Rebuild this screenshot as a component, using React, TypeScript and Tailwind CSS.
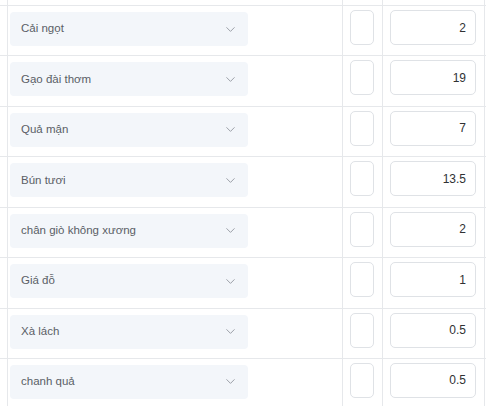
import { ChevronDown } from 'lucide-react';

const items = [
  { name: 'Cải ngọt', qty: '2' },
  { name: 'Gạo đài thơm', qty: '19' },
  { name: 'Quả mận', qty: '7' },
  { name: 'Bún tươi', qty: '13.5' },
  { name: 'chân giò không xương', qty: '2' },
  { name: 'Giá đỗ', qty: '1' },
  { name: 'Xà lách', qty: '0.5' },
  { name: 'chanh quả', qty: '0.5' },
];

function Row({ name, qty }: { name: string; qty: string }) {
  return (
    <div className="flex h-[50.43px] shrink-0 border-t border-[#e6e8eb]">
      <div className="w-[8px] shrink-0 border-r border-[#e6e8eb]" />
      <div className="w-[335px] shrink-0 border-r border-[#e6e8eb] pl-[2px] pt-[6px]">
        <div className="flex h-[34px] w-[238px] items-center justify-between rounded-[4px] bg-[#f3f6fa] pl-[11px] pr-[10px] text-[11.5px] text-[#5a5e66]">
          <span>{name}</span>
          <ChevronDown size={15} strokeWidth={1.4} className="text-[#8f949c]" />
        </div>
      </div>
      <div className="w-[40px] shrink-0 border-r border-[#e6e8eb] pl-[7px] pt-[4px]">
        <div className="h-[35px] w-[24px] rounded-[5px] border border-[#dfe2e6] bg-white" />
      </div>
      <div className="w-[102px] shrink-0 border-r border-[#e6e8eb] pl-[7px] pt-[4px]">
        <div className="flex h-[35px] w-[86px] items-center justify-end rounded-[5px] border border-[#dfe2e6] bg-white pr-[9px] text-[12px] text-[#303133]">
          {qty}
        </div>
      </div>
    </div>
  );
}

export default function App() {
  return (
    <div className="h-[406px] w-[486px] overflow-hidden bg-white font-['Liberation_Sans',Arial,sans-serif]">
      <div className="flex h-[5px]">
        <div className="w-[8px] shrink-0 border-r border-[#e6e8eb]" />
        <div className="w-[335px] shrink-0 border-r border-[#e6e8eb]" />
        <div className="w-[40px] shrink-0 border-r border-[#e6e8eb]" />
        <div className="w-[102px] shrink-0 border-r border-[#e6e8eb]" />
      </div>
      {items.map((it) => (
        <Row key={it.name} name={it.name} qty={it.qty} />
      ))}
    </div>
  );
}
